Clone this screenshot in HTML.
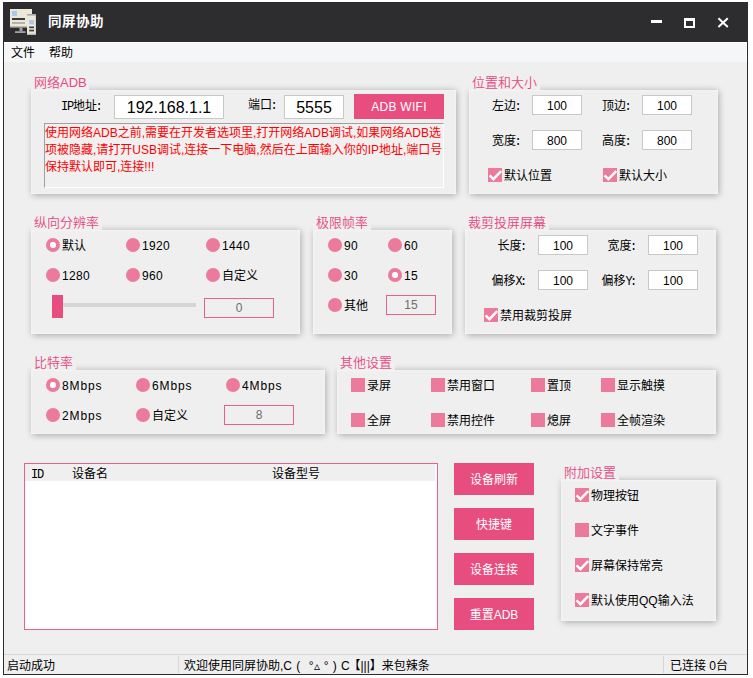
<!DOCTYPE html>
<html lang="zh-CN"><head><meta charset="utf-8"><title>同屏协助</title>
<style>
html,body{margin:0;padding:0;background:#fff;}
body{width:753px;height:678px;position:relative;overflow:hidden;font-family:"Liberation Sans","Noto Sans CJK SC",sans-serif;font-size:12px;color:#000;}
.abs,.win *{position:absolute;box-sizing:border-box;}
.win{position:absolute;left:3px;top:2px;width:745px;height:673px;background:#efefef;border:1px solid #2b2b2e;border-top:none;box-sizing:border-box;}
.tb{left:-1px;top:0;width:745px;height:40px;background:#2d2d30;}
.ttl{left:45px;top:0;height:40px;line-height:40px;color:#fff;font-weight:bold;font-size:13.5px;letter-spacing:.5px;white-space:nowrap;}
.menu{left:0;top:40px;width:743px;height:20px;background:#f5f6f7;border-top:1px solid #fff;border-right:1px solid #fff;}
.menu span{top:0px;height:20px;line-height:20px;font-size:12px;white-space:nowrap;}
.gb{background:#efefef;box-shadow:.5px 1px 7px rgba(0,0,0,.32),inset 0 0 3px rgba(255,255,255,.7);}
.gt{color:#e7477e;font-weight:350;font-size:13px;line-height:15px;height:15px;background:#efefef;white-space:nowrap;padding:0 3px;}
.lb{font-size:12px;line-height:14px;height:14px;white-space:nowrap;}
.sl{font-family:"Liberation Mono","Noto Sans CJK SC",monospace;}
.win b,.win i{position:static;font-weight:normal;font-style:normal;}
.sl b{letter-spacing:-1.2px;}
.in{background:#fff;border:1px solid #c8c8c8;text-align:center;font-size:12px;white-space:nowrap;}
.pin{border:1px solid #e8608c;background:#efefef;color:#6d6d6d;text-align:center;font-size:12px;white-space:nowrap;}
.rd{width:14px;height:14px;border-radius:50%;background:#ec7a9c;}
.rd.on::after{content:"";position:absolute;left:4.3px;top:4.3px;width:5.4px;height:5.4px;border-radius:50%;background:#fff;}
.cb{width:14px;height:14px;background:#ec7a9c;}
.btn{background:#e84d80;color:#fff;text-align:center;font-size:12px;white-space:nowrap;}
</style></head><body>
<div class="win">

<div class="tb"></div>
<svg style="left:6px;top:7px" width="28" height="28" viewBox="0 0 28 28">
<rect x="0" y="0" width="22" height="17" fill="#ebe8da"/>
<rect x="0" y="17" width="22" height="1.6" fill="#b9b9b3"/>
<rect x="2" y="2" width="5" height="5" fill="#a9c9ea"/>
<rect x="2" y="9" width="13" height="2" fill="#3a3a3a"/>
<rect x="2" y="13" width="13" height="2" fill="#b5b3a8"/>
<rect x="9.5" y="18.6" width="3" height="3.6" fill="#a3a3a3"/>
<rect x="5" y="22.2" width="10.5" height="1.8" fill="#a3a3a3"/>
<rect x="17" y="5" width="8.9" height="21" fill="#ebe8da"/>
<rect x="17" y="5" width="8.9" height="1.6" fill="#a8a8a8"/>
<rect x="17" y="24.6" width="8.9" height="1.4" fill="#b9b9b3"/>
<rect x="19.2" y="11" width="4.8" height="4.2" fill="#a9c9ea"/>
<rect x="19.2" y="17.5" width="4.8" height="1.7" fill="#3a3a3a"/>
<rect x="19.2" y="20.7" width="4.8" height="1.7" fill="#3a3a3a"/>
</svg>
<div class="ttl" style="left:44px;top:0px">同屏协助</div>
<div style="left:646.5px;top:18.0px;width:11px;height:3px;background:#fff"></div>
<div style="left:680.3px;top:16.3px;width:11px;height:10px;border:2px solid #fff;border-top-width:3px"></div>
<svg style="left:713px;top:15px" width="13" height="12" viewBox="0 0 13 12"><path d="M1.4 1.2 L10.8 10 M10.8 1.2 L1.4 10" stroke="#fff" stroke-width="2" fill="none"/></svg>
<div class="menu"><span style="left:7px">文件</span><span style="left:45px">帮助</span></div>
<div class="gb" style="left:27px;top:88px;width:425px;height:104px"></div>
<div class="gt" style="left:27px;top:73px;width:58px">网络ADB</div>
<div class="lb sl" style="left:57px;top:98px;"><b>IP</b>地址<b style="margin-left:-1.5px">:</b></div>
<div class="in" style="left:110px;top:93px;width:110px;height:24px;line-height:24px;font-size:16px;">192.168.1.1</div>
<div class="lb sl" style="left:244px;top:97px;">端口<b style="margin-left:-1.5px">:</b></div>
<div class="in" style="left:280px;top:93px;width:60px;height:24px;line-height:24px;font-size:16px;">5555</div>
<div class="btn" style="left:350px;top:92px;width:90px;height:25px;line-height:27px;letter-spacing:.3px">ADB WIFI</div>
<div style="left:40px;top:121px;width:400px;height:65px;border:1px solid #fff;border-top-color:#a0a0a0;border-left-color:#a0a0a0;background:#f0f0f0"></div>
<div style="left:41px;top:123px;width:400px;color:#ff0000;font-size:12px;line-height:17px;white-space:nowrap">使用网络ADB之前,需要在开发者选项里,打开网络ADB调试,如果网络ADB选<br>项被隐藏,请打开USB调试,连接一下电脑,然后在上面输入你的IP地址,端口号<br>保持默认即可,连接!!!</div>
<div class="gb" style="left:465px;top:88px;width:249px;height:104px"></div>
<div class="gt" style="left:465px;top:73px;width:71px">位置和大小</div>
<div class="lb sl" style="left:488px;top:98px;">左边<b style="margin-left:-1.5px">:</b></div>
<div class="in" style="left:528px;top:93px;width:50px;height:20px;line-height:20px;font-size:12px;font-family:"Liberation Mono",monospace;letter-spacing:-1.2px;">100</div>
<div class="lb sl" style="left:598px;top:98px;">顶边<b style="margin-left:-1.5px">:</b></div>
<div class="in" style="left:638px;top:93px;width:50px;height:20px;line-height:20px;font-size:12px;font-family:"Liberation Mono",monospace;letter-spacing:-1.2px;">100</div>
<div class="lb sl" style="left:488px;top:133px;">宽度<b style="margin-left:-1.5px">:</b></div>
<div class="in" style="left:528px;top:128px;width:50px;height:20px;line-height:20px;font-size:12px;font-family:"Liberation Mono",monospace;letter-spacing:-1.2px;">800</div>
<div class="lb sl" style="left:598px;top:133px;">高度<b style="margin-left:-1.5px">:</b></div>
<div class="in" style="left:638px;top:128px;width:50px;height:20px;line-height:20px;font-size:12px;font-family:"Liberation Mono",monospace;letter-spacing:-1.2px;">800</div>
<div class="cb" style="left:484px;top:166px"><svg style="left:0;top:0" width="14" height="14" viewBox="0 0 14 14"><path d="M1.6 7.4 L5.4 11.2 L13.2 3.0" stroke="#fff" stroke-width="2.5" fill="none"/></svg></div>
<div class="lb" style="left:500px;top:167px;">默认位置</div>
<div class="cb" style="left:599px;top:166px"><svg style="left:0;top:0" width="14" height="14" viewBox="0 0 14 14"><path d="M1.6 7.4 L5.4 11.2 L13.2 3.0" stroke="#fff" stroke-width="2.5" fill="none"/></svg></div>
<div class="lb" style="left:615px;top:167px;">默认大小</div>
<div class="gb" style="left:27px;top:228px;width:269px;height:104px"></div>
<div class="gt" style="left:27px;top:213px;width:71px">纵向分辨率</div>
<div class="rd on" style="left:42px;top:236px"></div>
<div class="lb" style="left:58px;top:237px;">默认</div>
<div class="rd" style="left:122px;top:236px"></div>
<div class="lb" style="left:138px;top:237px;letter-spacing:.35px;">1920</div>
<div class="rd" style="left:202px;top:236px"></div>
<div class="lb" style="left:218px;top:237px;letter-spacing:.35px;">1440</div>
<div class="rd" style="left:42px;top:266px"></div>
<div class="lb" style="left:58px;top:267px;letter-spacing:.35px;">1280</div>
<div class="rd" style="left:122px;top:266px"></div>
<div class="lb" style="left:138px;top:267px;letter-spacing:.35px;">960</div>
<div class="rd" style="left:202px;top:266px"></div>
<div class="lb" style="left:218px;top:267px;">自定义</div>
<div style="left:52px;top:301px;width:140px;height:4px;background:#d6d6d6"></div>
<div style="left:48px;top:293px;width:11px;height:23px;background:#e84d80"></div>
<div class="pin" style="left:200px;top:296px;width:70px;height:20px;line-height:18px;font-size:12px;">0</div>
<div class="gb" style="left:309px;top:228px;width:139px;height:104px"></div>
<div class="gt" style="left:309px;top:213px;width:58px">极限帧率</div>
<div class="rd" style="left:324px;top:236px"></div>
<div class="lb" style="left:340px;top:237px;letter-spacing:.35px;">90</div>
<div class="rd" style="left:384px;top:236px"></div>
<div class="lb" style="left:400px;top:237px;letter-spacing:.35px;">60</div>
<div class="rd" style="left:324px;top:266px"></div>
<div class="lb" style="left:340px;top:267px;letter-spacing:.35px;">30</div>
<div class="rd on" style="left:384px;top:266px"></div>
<div class="lb" style="left:400px;top:267px;letter-spacing:.35px;">15</div>
<div class="rd" style="left:324px;top:296px"></div>
<div class="lb" style="left:340px;top:297px;">其他</div>
<div class="pin" style="left:382px;top:293px;width:50px;height:20px;line-height:18px;font-size:12px;">15</div>
<div class="gb" style="left:461px;top:228px;width:251px;height:104px"></div>
<div class="gt" style="left:461px;top:213px;width:84px">裁剪投屏屏幕</div>
<div class="lb sl" style="right:221px;top:238px;">长度<b style="margin-left:-1.5px">:</b></div>
<div class="in" style="left:534px;top:233px;width:50px;height:20px;line-height:20px;font-size:12px;font-family:"Liberation Mono",monospace;letter-spacing:-1.2px;">100</div>
<div class="lb sl" style="right:111px;top:238px;">宽度<b style="margin-left:-1.5px">:</b></div>
<div class="in" style="left:644px;top:233px;width:50px;height:20px;line-height:20px;font-size:12px;font-family:"Liberation Mono",monospace;letter-spacing:-1.2px;">100</div>
<div class="lb sl" style="right:221px;top:273px;">偏移<b>X</b><b style="margin-left:-1.5px">:</b></div>
<div class="in" style="left:534px;top:268px;width:50px;height:20px;line-height:20px;font-size:12px;font-family:"Liberation Mono",monospace;letter-spacing:-1.2px;">100</div>
<div class="lb sl" style="right:111px;top:273px;">偏移<b>Y</b><b style="margin-left:-1.5px">:</b></div>
<div class="in" style="left:644px;top:268px;width:50px;height:20px;line-height:20px;font-size:12px;font-family:"Liberation Mono",monospace;letter-spacing:-1.2px;">100</div>
<div class="cb" style="left:480px;top:306px"><svg style="left:0;top:0" width="14" height="14" viewBox="0 0 14 14"><path d="M1.6 7.4 L5.4 11.2 L13.2 3.0" stroke="#fff" stroke-width="2.5" fill="none"/></svg></div>
<div class="lb" style="left:496px;top:307px;">禁用裁剪投屏</div>
<div class="gb" style="left:27px;top:368px;width:294px;height:64px"></div>
<div class="gt" style="left:27px;top:353px;width:45px">比特率</div>
<div class="rd on" style="left:42px;top:376px"></div>
<div class="lb" style="left:58px;top:377px;letter-spacing:.9px;">8Mbps</div>
<div class="rd" style="left:132px;top:376px"></div>
<div class="lb" style="left:148px;top:377px;letter-spacing:.9px;">6Mbps</div>
<div class="rd" style="left:222px;top:376px"></div>
<div class="lb" style="left:238px;top:377px;letter-spacing:.9px;">4Mbps</div>
<div class="rd" style="left:42px;top:406px"></div>
<div class="lb" style="left:58px;top:407px;letter-spacing:.9px;">2Mbps</div>
<div class="rd" style="left:132px;top:406px"></div>
<div class="lb" style="left:148px;top:407px;">自定义</div>
<div class="pin" style="left:220px;top:403px;width:70px;height:20px;line-height:18px;font-size:12px;">8</div>
<div class="gb" style="left:333px;top:368px;width:379px;height:64px"></div>
<div class="gt" style="left:333px;top:353px;width:58px">其他设置</div>
<div class="cb" style="left:347px;top:376px"></div>
<div class="lb" style="left:363px;top:377px;">录屏</div>
<div class="cb" style="left:347px;top:411px"></div>
<div class="lb" style="left:363px;top:412px;">全屏</div>
<div class="cb" style="left:427px;top:376px"></div>
<div class="lb" style="left:443px;top:377px;">禁用窗口</div>
<div class="cb" style="left:427px;top:411px"></div>
<div class="lb" style="left:443px;top:412px;">禁用控件</div>
<div class="cb" style="left:527px;top:376px"></div>
<div class="lb" style="left:543px;top:377px;">置顶</div>
<div class="cb" style="left:527px;top:411px"></div>
<div class="lb" style="left:543px;top:412px;">熄屏</div>
<div class="cb" style="left:597px;top:376px"></div>
<div class="lb" style="left:613px;top:377px;">显示触摸</div>
<div class="cb" style="left:597px;top:411px"></div>
<div class="lb" style="left:613px;top:412px;">全帧渲染</div>
<div style="left:20px;top:461px;width:414px;height:167px;border:1px solid #e8608c;background:#fff"></div>
<div style="left:21px;top:462px;width:410px;height:17px;background:#efefef"></div>
<div class="lb sl" style="left:27px;top:466px;"><b>ID</b></div>
<div class="lb sl" style="left:68px;top:466px;">设备名</div>
<div class="lb sl" style="left:268px;top:466px;">设备型号</div>
<div class="btn" style="left:450px;top:461px;width:80px;height:32px;line-height:34px">设备刷新</div>
<div class="btn" style="left:450px;top:506px;width:80px;height:32px;line-height:34px">快捷键</div>
<div class="btn" style="left:450px;top:551px;width:80px;height:32px;line-height:34px">设备连接</div>
<div class="btn" style="left:450px;top:596px;width:80px;height:32px;line-height:34px">重置ADB</div>
<div class="gb" style="left:557px;top:478px;width:155px;height:141px"></div>
<div class="gt" style="left:557px;top:463px;width:58px">附加设置</div>
<div class="cb" style="left:571px;top:486px"><svg style="left:0;top:0" width="14" height="14" viewBox="0 0 14 14"><path d="M1.6 7.4 L5.4 11.2 L13.2 3.0" stroke="#fff" stroke-width="2.5" fill="none"/></svg></div>
<div class="lb" style="left:587px;top:487px;">物理按钮</div>
<div class="cb" style="left:571px;top:521px"></div>
<div class="lb" style="left:587px;top:522px;">文字事件</div>
<div class="cb" style="left:571px;top:556px"><svg style="left:0;top:0" width="14" height="14" viewBox="0 0 14 14"><path d="M1.6 7.4 L5.4 11.2 L13.2 3.0" stroke="#fff" stroke-width="2.5" fill="none"/></svg></div>
<div class="lb" style="left:587px;top:557px;">屏幕保持常亮</div>
<div class="cb" style="left:571px;top:591px"><svg style="left:0;top:0" width="14" height="14" viewBox="0 0 14 14"><path d="M1.6 7.4 L5.4 11.2 L13.2 3.0" stroke="#fff" stroke-width="2.5" fill="none"/></svg></div>
<div class="lb" style="left:587px;top:592px;">默认使用QQ输入法</div>
<div style="left:0;top:652px;width:743px;height:1px;background:#d7d7d7"></div>
<div style="left:174px;top:654px;width:1px;height:17px;background:#d7d7d7"></div>
<div style="left:659px;top:654px;width:1px;height:17px;background:#d7d7d7"></div>
<div class="lb" style="left:3px;top:657px;">启动成功</div>
<div class="lb" style="left:180px;top:657px;">欢迎使用同屏协助,<i style="word-spacing:.9px">C (&nbsp; °▵ ° ) C</i><i style="margin-left:-1.2px">【|||】</i>来包辣条</div>
<div class="lb" style="left:666px;top:657px;">已连接 0台</div>
</div></body></html>
